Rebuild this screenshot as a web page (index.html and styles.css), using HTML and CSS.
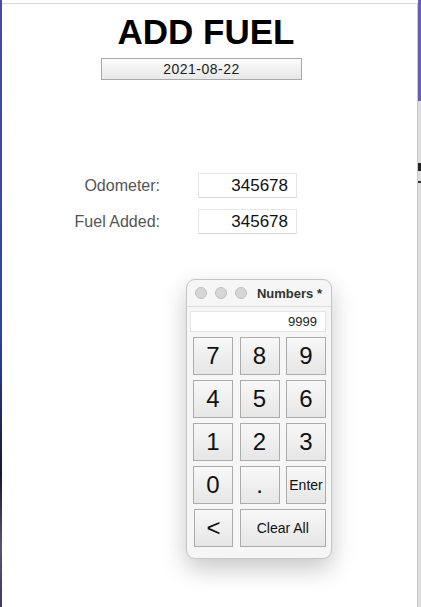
FILE: index.html
```html
<!DOCTYPE html>
<html lang="en">
<head>
	<meta charset="UTF-8">
	<meta name="viewport" content="width=device-width, initial-scale=1.0">
	<title>Add Fuel</title>
	<link rel="stylesheet" href="styles.css">
</head>
<body>

	<div class="screen">
		<div class="desk-left"></div>

		<main class="window">
			<h1 class="title">ADD FUEL</h1>
			<div class="date-field">2021-08-22</div>

			<!-- Entry fields -->
			<div class="form">
				<label class="form-label">Odometer:</label>
				<div class="form-input">345678</div>
				<label class="form-label">Fuel Added:</label>
				<div class="form-input">345678</div>
			</div>

			<!-- Numbers palette -->
			<section class="numpad">
				<header class="numpad-bar">
					<span class="dot"></span>
					<span class="dot"></span>
					<span class="dot"></span>
					<span class="numpad-title">Numbers *</span>
				</header>
				<div class="numpad-display">9999</div>
				<div class="numpad-keys">
					<button class="key">7</button>
					<button class="key">8</button>
					<button class="key">9</button>
					<button class="key">4</button>
					<button class="key">5</button>
					<button class="key">6</button>
					<button class="key">1</button>
					<button class="key">2</button>
					<button class="key">3</button>
					<button class="key">0</button>
					<button class="key">.</button>
					<button class="key key-small">Enter</button>
					<button class="key key-back">&lt;</button>
					<button class="key key-small key-wide">Clear All</button>
				</div>
			</section>
		</main>

		<div class="desk-right"></div>
	</div>

</body>
</html>
```

FILE: styles.css
```css
body {
	margin: 0;
	padding: 0;
	background-color: #fff;
	font-family: "Liberation Sans", Arial, sans-serif;
}

.screen {
	display: flex;
	height: 607px;
	overflow: hidden;
}

.desk-left {
	width: 2px;
	background: linear-gradient(#4a4aa6, #2b45a0 55%, #141830 78%, #5b5378 90%, #3c3870);
}

.desk-right {
	width: 3px;
	background: linear-gradient(#6a5eb2 0, #6a5eb2 101px, #dedede 101px, #dedede 163px, #222 163px, #222 171px, #dedede 171px, #dedede 181px, #333 181px, #333 183px, #dedede 183px);
}

.window {
	flex: 1;
	margin-top: 3px;
	border-top: 1px solid #d8d8d8;
	border-right: 1px solid #c9c9c9;
	background-color: #fff;
}

.title {
	margin: 0;
	padding: 8px 7px 0 0;
	font-size: 35px;
	line-height: 40px;
	font-weight: bold;
	text-align: center;
	color: #000;
}

.date-field {
	box-sizing: border-box;
	width: 201px;
	height: 22px;
	margin: 6px 0 0 99px;
	border: 1px solid #a9a9a9;
	background: linear-gradient(#fbfbfb, #e8e8e8);
	font-size: 14px;
	letter-spacing: 0.5px;
	line-height: 20px;
	text-align: center;
	color: #222;
}

.form {
	display: grid;
	grid-template-columns: 158px 99px;
	grid-auto-rows: 25px;
	column-gap: 38px;
	row-gap: 11px;
	margin-top: 93px;
}

.form-label {
	font-size: 16px;
	line-height: 26px;
	text-align: right;
	color: #555;
}

.form-input {
	box-sizing: border-box;
	height: 25px;
	padding-right: 8px;
	border: 1px solid #e6e6e6;
	border-bottom-color: #d6d6d6;
	background-color: #fff;
	font-size: 17px;
	line-height: 24px;
	text-align: right;
	color: #111;
}

.numpad {
	box-sizing: border-box;
	width: 146px;
	margin: 45px 0 0 184px;
	padding-bottom: 11px;
	border: 1px solid #c6c6c6;
	border-radius: 9px;
	background-color: #f6f6f6;
	box-shadow: 0 10px 24px rgba(0, 0, 0, 0.22);
}

.numpad-bar {
	display: flex;
	align-items: center;
	gap: 8px;
	height: 26px;
	padding: 0 9px 0 8px;
	border-bottom: 1px solid #dddddd;
}

.dot {
	box-sizing: border-box;
	width: 12px;
	height: 12px;
	border-radius: 50%;
	border: 1px solid #c0c0c0;
	background-color: #d6d6d6;
}

.numpad-title {
	margin-left: auto;
	font-size: 13px;
	font-weight: bold;
	color: #333;
}

.numpad-display {
	box-sizing: border-box;
	height: 21px;
	margin: 4px 5px 0 3px;
	padding-right: 8px;
	border: 1px solid #e4e4e4;
	background-color: #fff;
	font-size: 13px;
	line-height: 20px;
	text-align: right;
	color: #222;
}

.numpad-keys {
	display: grid;
	grid-template-columns: 40px 40px 40px;
	grid-auto-rows: 38px;
	column-gap: 6.5px;
	row-gap: 5px;
	margin: 5px 0 0 6px;
}

.key {
	padding: 0;
	border: 1px solid #ababab;
	background: linear-gradient(#f8f8f8, #e6e6e6);
	font-family: "Liberation Sans", Arial, sans-serif;
	font-size: 24px;
	color: #111;
}

.key-small {
	font-size: 14px;
}

.key-back {
	margin-left: 1px;
}

.key-wide {
	grid-column: span 2;
}
```
